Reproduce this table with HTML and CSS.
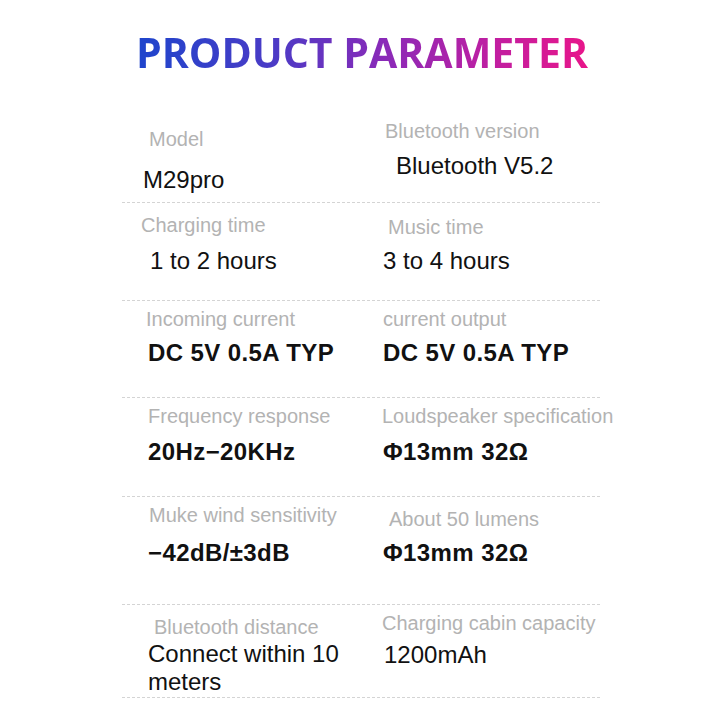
FILE: index.html
```html
<!DOCTYPE html>
<html>
<head>
<meta charset="utf-8">
<link rel="stylesheet" href="styles.css">
</head>
<body>
<div class="page">
  <div class="title-wrap"><h1 class="title">PRODUCT PARAMETER</h1></div>
  <div class="specs">
    <div class="row r1">
      <div class="cell l"><div class="label ind-1">Model</div><div class="value ind-m5">M29pro</div></div>
      <div class="cell r"><div class="label ind-2">Bluetooth version</div><div class="value ind-13">Bluetooth V5.2</div></div>
    </div>
    <div class="row r2">
      <div class="cell l"><div class="label ind-m7">Charging time</div><div class="value ind-2">1 to 2 hours</div></div>
      <div class="cell r"><div class="label ind-5">Music time</div><div class="value">3 to 4 hours</div></div>
    </div>
    <div class="row r3">
      <div class="cell l"><div class="label ind-m2">Incoming current</div><div class="value bold">DC 5V 0.5A TYP</div></div>
      <div class="cell r"><div class="label">current output</div><div class="value bold">DC 5V 0.5A TYP</div></div>
    </div>
    <div class="row r4">
      <div class="cell l"><div class="label">Frequency response</div><div class="value bold">20Hz−20KHz</div></div>
      <div class="cell r"><div class="label ind-m1">Loudspeaker specification</div><div class="value bold">Φ13mm 32Ω</div></div>
    </div>
    <div class="row r5">
      <div class="cell l"><div class="label ind-1">Muke wind sensitivity</div><div class="value bold">−42dB/±3dB</div></div>
      <div class="cell r"><div class="label ind-6">About 50 lumens</div><div class="value bold">Φ13mm 32Ω</div></div>
    </div>
    <div class="row r6">
      <div class="cell l"><div class="label ind-6">Bluetooth distance</div><div class="value wrap">Connect within 10 meters</div></div>
      <div class="cell r"><div class="label ind-m1">Charging cabin capacity</div><div class="value ind-1">1200mAh</div></div>
    </div>
  </div>
</div>
</body>
</html>
```
FILE: styles.css
```css
html, body {
  margin: 0;
  padding: 0;
  background: #ffffff;
}

.page {
  width: 726px;
  height: 726px;
  overflow: hidden;
  font-family: "Liberation Sans", Arial, sans-serif;
}

.title-wrap {
  height: 85px;
  padding-top: 27px;
  box-sizing: border-box;
  display: flex;
  justify-content: center;
}

.title {
  margin: 0 0 0 -2px;
  font-family: "Open Sans", "Noto Sans", sans-serif;
  font-weight: 700;
  font-size: 41px;
  line-height: 50px;
  letter-spacing: 0;
  white-space: nowrap;
  background: linear-gradient(90deg, #1e45cc 0%, #4a3bc6 30%, #8a2ab8 55%, #c21ea0 80%, #e8168a 100%);
  -webkit-background-clip: text;
  background-clip: text;
  color: transparent;
}

.specs {
  margin-left: 122px;
  width: 478px;
  margin-top: 30px;
}

.row {
  display: grid;
  grid-template-columns: 258px 1fr;
  border-bottom: 1px dashed #d4d4d4;
  box-sizing: border-box;
}

.cell {
  display: flex;
  flex-direction: column;
  white-space: nowrap;
}

.cell.l { padding-left: 26px; }
.cell.r { padding-left: 3px; }

.label {
  font-size: 20px;
  line-height: 24px;
  color: #b3b3b3;
}

.value {
  font-size: 24px;
  line-height: 28px;
  color: #111111;
}

.value.bold { font-weight: 700; letter-spacing: 0.4px; }
.value.wrap { width: 215px; white-space: normal; }

.ind-1 { margin-left: 1px; }
.ind-2 { margin-left: 2px; }
.ind-5 { margin-left: 5px; }
.ind-6 { margin-left: 6px; }
.ind-13 { margin-left: 13px; }
.ind-m1 { margin-left: -1px; }
.ind-m2 { margin-left: -2px; }
.ind-m5 { margin-left: -5px; }
.ind-m7 { margin-left: -7px; }

/* row 1 */
.r1 { height: 88px; }
.r1 .l { padding-top: 12px; gap: 15px; }
.r1 .r { padding-top: 4px; gap: 9px; }

/* row 2 */
.r2 { height: 98px; }
.r2 .l { padding-top: 10px; gap: 10px; }
.r2 .r { padding-top: 12px; gap: 8px; }

/* row 3 */
.r3 { height: 97px; }
.r3 .cell { padding-top: 6px; gap: 8px; }

/* row 4 */
.r4 { height: 99px; }
.r4 .cell { padding-top: 6px; gap: 10px; }

/* row 5 */
.r5 { height: 108px; }
.r5 .l { padding-top: 6px; gap: 12px; }
.r5 .r { padding-top: 10px; gap: 8px; }

/* row 6 */
.r6 { height: 93px; }
.r6 .l { padding-top: 10px; gap: 1px; }
.r6 .r { padding-top: 6px; gap: 6px; }
```
